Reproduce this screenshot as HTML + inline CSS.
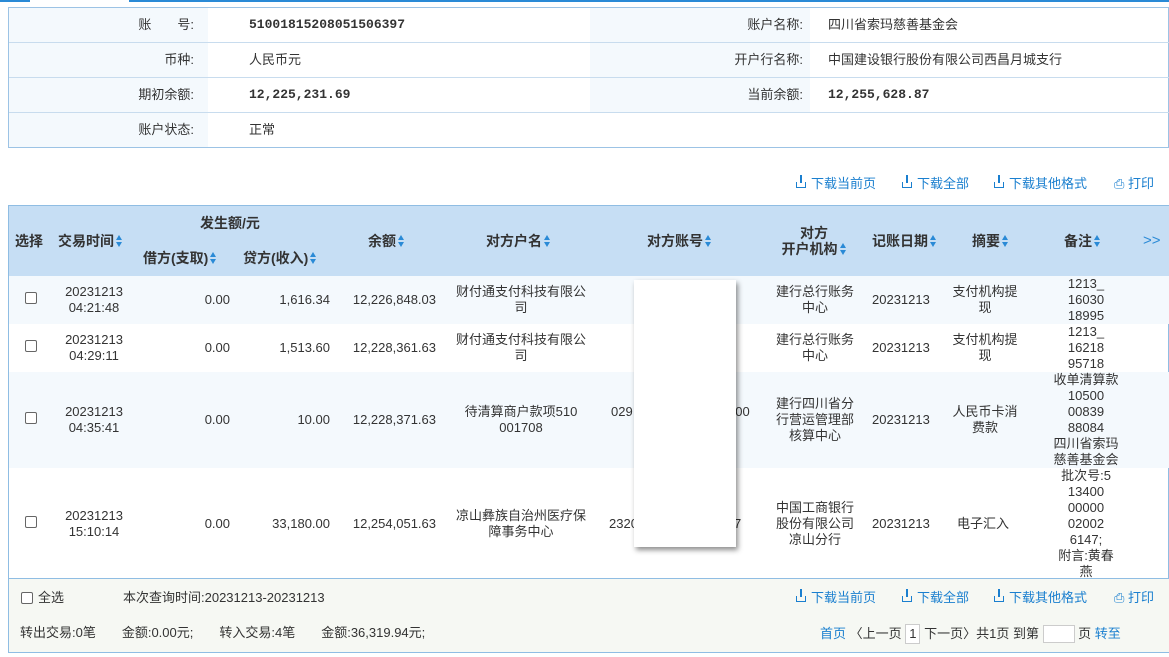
<!DOCTYPE html><html><head><meta charset="utf-8"><style>
*{margin:0;padding:0;box-sizing:border-box}
body{width:1169px;height:657px;overflow:hidden;background:#fff;font-family:"Liberation Sans","Noto Sans CJK SC",sans-serif;font-size:13px;color:#333;position:relative}
.a{position:absolute;white-space:nowrap;line-height:18px}
.r{position:absolute;white-space:nowrap;line-height:18px;text-align:right}
.c{position:absolute;text-align:center;line-height:16px;white-space:normal;word-break:break-all}
.l{color:#1a7fcf}
.s{display:inline-block;width:7px;height:14px;vertical-align:-2px;margin-left:2px;position:relative}
.s:before{content:"";position:absolute;left:0;top:1px;border:3.5px solid transparent;border-bottom:5px solid #2a8ad6;border-top:0}
.s:after{content:"";position:absolute;left:0;top:8px;border:3.5px solid transparent;border-top:5px solid #2a8ad6;border-bottom:0}
.h{font-weight:bold;color:#333;font-size:14px}
.m{font-family:"Liberation Mono","Noto Sans CJK SC",monospace}
.dl{display:inline-block;width:10px;height:6px;border:1px solid #1a7fcf;border-top:none;margin-right:5px;vertical-align:0;position:relative}
.dl:before{content:"";position:absolute;left:3px;top:-7px;width:2px;height:8px;background:#1a7fcf}
.cb{position:absolute;width:12px;height:12px;border:1px solid #666;border-radius:2px;background:#fff}
</style></head><body>
<div class="a" style="left:0;top:0;width:30px;height:2px;background:#2a8ad6"></div>
<div class="a" style="left:129px;top:0;width:1040px;height:2px;background:#2a8ad6"></div>
<!-- info -->
<div class="a" style="left:8px;top:7px;width:1161px;height:141px;border:1px solid #9cc3e5;background:#fff"></div>
<div class="a" style="left:9px;top:8px;width:199px;height:139px;background:#f4f9fd"></div>
<div class="a" style="left:590px;top:8px;width:220px;height:104px;background:#f4f9fd"></div>
<div class="a" style="left:9px;top:42px;width:1160px;height:1px;background:#c8dcee"></div>
<div class="a" style="left:9px;top:77px;width:1160px;height:1px;background:#c8dcee"></div>
<div class="a" style="left:9px;top:112px;width:1160px;height:1px;background:#c8dcee"></div>
<div class="r" style="right:975px;top:16px">账　　号:</div>
<div class="a m" style="left:249px;top:16px;font-weight:bold">51001815208051506397</div>
<div class="r" style="right:975px;top:51px">币种:</div><div class="a" style="left:249px;top:51px">人民币元</div>
<div class="r" style="right:975px;top:86px">期初余额:</div><div class="a m" style="left:249px;top:86px;font-weight:bold">12,225,231.69</div>
<div class="r" style="right:975px;top:121px">账户状态:</div><div class="a" style="left:249px;top:121px">正常</div>
<div class="r" style="right:366px;top:16px">账户名称:</div><div class="a" style="left:828px;top:16px">四川省索玛慈善基金会</div>
<div class="r" style="right:366px;top:51px">开户行名称:</div><div class="a" style="left:828px;top:51px">中国建设银行股份有限公司西昌月城支行</div>
<div class="r" style="right:366px;top:86px">当前余额:</div><div class="a m" style="left:828px;top:86px;font-weight:bold">12,255,628.87</div>
<!-- toolbar -->
<div class="a l" style="left:796px;top:175px"><span class="dl"></span>下载当前页</div>
<div class="a l" style="left:902px;top:175px"><span class="dl"></span>下载全部</div>
<div class="a l" style="left:994px;top:175px"><span class="dl"></span>下载其他格式</div>
<div class="a l" style="left:1114px;top:175px">⎙ 打印</div>
<!-- table -->
<div class="a" style="left:8px;top:205px;width:1161px;height:448px;border:1px solid #8fbde3"></div>
<div class="a" style="left:9px;top:206px;width:1160px;height:70px;background:#c6def4"></div>
<div class="a" style="left:9px;top:276px;width:1160px;height:48px;background:#f4f9fd"></div>
<div class="a" style="left:9px;top:372px;width:1160px;height:96px;background:#f4f9fd"></div>
<div class="a" style="left:9px;top:578px;width:1160px;height:74px;background:#f6f8f3;border-top:1px solid #8fbde3"></div>
<div class="a h" style="left:15px;top:232px">选择</div>
<div class="a h" style="left:58px;top:232px">交易时间<span class="s"></span></div>
<div class="a h" style="left:200px;top:214px">发生额/元</div>
<div class="a h" style="left:143px;top:249px">借方(支取)<span class="s"></span></div>
<div class="a h" style="left:243px;top:249px">贷方(收入)<span class="s"></span></div>
<div class="a h" style="left:368px;top:232px">余额<span class="s"></span></div>
<div class="a h" style="left:486px;top:232px">对方户名<span class="s"></span></div>
<div class="a h" style="left:647px;top:232px">对方账号<span class="s"></span></div>
<div class="a h" style="left:776px;top:225px;text-align:center;line-height:16px;width:76px">对方<br>开户机构<span class="s"></span></div>
<div class="a h" style="left:872px;top:232px">记账日期<span class="s"></span></div>
<div class="a h" style="left:972px;top:232px">摘要<span class="s"></span></div>
<div class="a h" style="left:1064px;top:232px">备注<span class="s"></span></div>
<div class="a" style="left:1143px;top:232px;color:#2a8ad6;font-size:15px">&gt;&gt;</div>
<!-- rows -->
<div class="cb" style="left:25px;top:292px"></div>
<div class="c" style="left:54px;top:284px;width:80px">20231213<br>04:21:48</div>
<div class="r" style="right:939px;top:291px">0.00</div><div class="r" style="right:839px;top:291px">1,616.34</div><div class="r" style="right:733px;top:291px">12,226,848.03</div>
<div class="c" style="left:455px;top:284px;width:132px">财付通支付科技有限公司</div>
<div class="c" style="left:770px;top:284px;width:90px">建行总行账务中心</div>
<div class="a" style="left:872px;top:291px">20231213</div>
<div class="c" style="left:950px;top:284px;width:70px">支付机构提现</div>
<div class="c" style="left:1040px;top:276px;width:92px">1213_<br>16030<br>18995</div>

<div class="cb" style="left:25px;top:340px"></div>
<div class="c" style="left:54px;top:332px;width:80px">20231213<br>04:29:11</div>
<div class="r" style="right:939px;top:339px">0.00</div><div class="r" style="right:839px;top:339px">1,513.60</div><div class="r" style="right:733px;top:339px">12,228,361.63</div>
<div class="c" style="left:455px;top:332px;width:132px">财付通支付科技有限公司</div>
<div class="c" style="left:770px;top:332px;width:90px">建行总行账务中心</div>
<div class="a" style="left:872px;top:339px">20231213</div>
<div class="c" style="left:950px;top:332px;width:70px">支付机构提现</div>
<div class="c" style="left:1040px;top:324px;width:92px">1213_<br>16218<br>95718</div>

<div class="cb" style="left:25px;top:412px"></div>
<div class="c" style="left:54px;top:404px;width:80px">20231213<br>04:35:41</div>
<div class="r" style="right:939px;top:411px">0.00</div><div class="r" style="right:839px;top:411px">10.00</div><div class="r" style="right:733px;top:411px">12,228,371.63</div>
<div class="c" style="left:455px;top:404px;width:132px">待清算商户款项510<br>001708</div>
<div class="a" style="left:611px;top:403px">029</div><div class="a" style="left:728px;top:403px">000</div>
<div class="c" style="left:770px;top:396px;width:90px">建行四川省分行营运管理部核算中心</div>
<div class="a" style="left:872px;top:411px">20231213</div>
<div class="c" style="left:950px;top:404px;width:70px">人民币卡消费款</div>
<div class="c" style="left:1040px;top:372px;width:92px">收单清算款<br>10500<br>00839<br>88084<br>四川省索玛<br>慈善基金会</div>

<div class="cb" style="left:25px;top:516px"></div>
<div class="c" style="left:54px;top:508px;width:80px">20231213<br>15:10:14</div>
<div class="r" style="right:939px;top:515px">0.00</div><div class="r" style="right:839px;top:515px">33,180.00</div><div class="r" style="right:733px;top:515px">12,254,051.63</div>
<div class="c" style="left:455px;top:508px;width:132px">凉山彝族自治州医疗保障事务中心</div>
<div class="a" style="left:609px;top:515px">2320</div><div class="a" style="left:734px;top:515px">7</div>
<div class="c" style="left:770px;top:500px;width:90px">中国工商银行股份有限公司凉山分行</div>
<div class="a" style="left:957px;top:515px">电子汇入</div>
<div class="a" style="left:872px;top:515px">20231213</div>
<div class="c" style="left:1040px;top:468px;width:92px">批次号:5<br>13400<br>00000<br>02002<br>6147;<br>附言:黄春<br>燕</div>
<!-- overlay -->
<div class="a" style="left:634px;top:280px;width:102px;height:267px;background:#fff;box-shadow:2px 3px 5px rgba(0,0,0,.45)"></div>
<!-- footer -->
<div class="cb" style="left:21px;top:592px"></div><div class="a" style="left:38px;top:589px">全选</div>
<div class="a" style="left:123px;top:589px">本次查询时间:20231213-20231213</div>
<div class="a l" style="left:796px;top:589px"><span class="dl"></span>下载当前页</div>
<div class="a l" style="left:902px;top:589px"><span class="dl"></span>下载全部</div>
<div class="a l" style="left:994px;top:589px"><span class="dl"></span>下载其他格式</div>
<div class="a l" style="left:1114px;top:589px">⎙ 打印</div>
<div class="a" style="left:20px;top:624px">转出交易:0笔　　金额:0.00元;　　转入交易:4笔　　金额:36,319.94元;</div>
<div class="a" style="left:820px;top:624px"><span class="l">首页</span> 〈上一页 <span style="display:inline-block;border:1px solid #ccc;padding:0 3px;background:#fff">1</span> 下一页〉共1页 到第 <span style="display:inline-block;width:32px;height:18px;border:1px solid #ccc;background:#fff;vertical-align:-5px"></span> 页 <span class="l">转至</span></div>
</body></html>
